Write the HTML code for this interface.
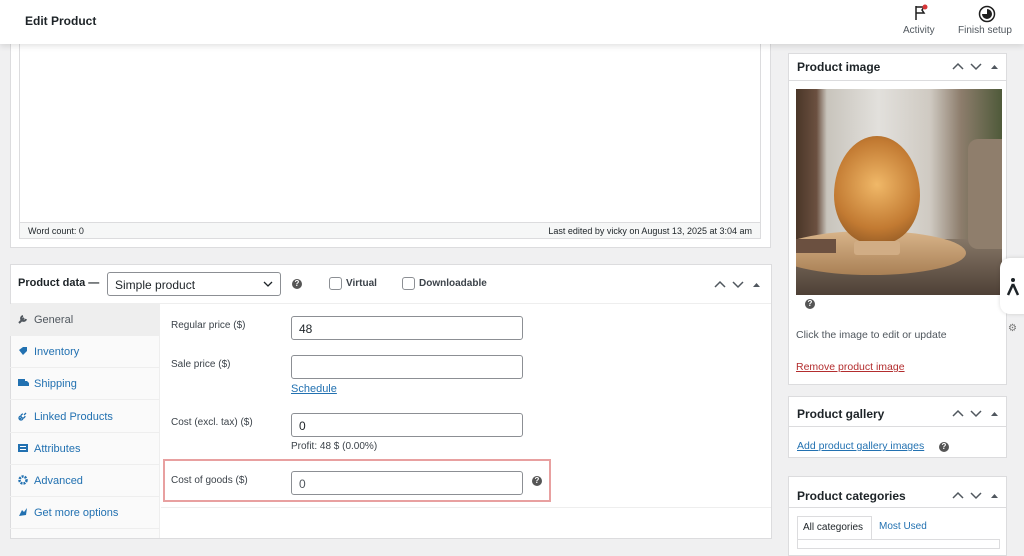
<!DOCTYPE html>
<html><head><style>
*{box-sizing:border-box;margin:0;padding:0}
body{width:1024px;height:547px;overflow:hidden;background:#f0f0f1;font-family:"Liberation Sans",sans-serif;color:#1d2327;position:relative;font-size:11px}
.abs{position:absolute}
.hdr{left:0;top:0;width:1024px;height:44px;background:#fff;box-shadow:0 2px 6px rgba(0,0,0,.12);z-index:5}
.box{background:#fff;border:1px solid #dcdcde}
.inp{position:absolute;border:1px solid #8c8f94;border-radius:3px;background:#fff;height:24px;width:232px;left:291px;font-size:12px;padding:5px 7px}
.lbl{position:absolute;left:171px;font-size:10px;color:#3c434a}
.tab{position:absolute;left:10px;width:150px;height:32px;border-bottom:1px solid #eee;color:#2271b1;font-size:11px;padding:10px 0 0 24px}
.tab svg{position:absolute;left:8px;top:10px}
.q{display:inline-block;width:10px;height:10px;border-radius:50%;background:#555;color:#fff;font-size:8px;text-align:center;line-height:10px;font-weight:bold}
.ttl{position:absolute;font-weight:bold;font-size:12px}
a{color:#2271b1;text-decoration:underline}
</style></head><body>
<div class="abs hdr">
 <div class="abs" style="left:25px;top:14px;font-size:12px;font-weight:bold">Edit Product</div>
 <svg class="abs" style="left:913px;top:4px" width="16" height="18"><path d="M3 2v14M3 3h8l-2 3 2 3H3" fill="none" stroke="#1e1e1e" stroke-width="1.5"/><circle cx="12" cy="3" r="2.5" fill="#d63638"/></svg>
 <div class="abs" style="left:903px;top:25px;font-size:10px;color:#50575e">Activity</div>
 <svg class="abs" style="left:978px;top:5px" width="18" height="18"><circle cx="9" cy="9" r="7.5" fill="none" stroke="#1e1e1e" stroke-width="1.5"/><path d="M9 4a5 5 0 1 1-5 5h5z" fill="#1e1e1e"/></svg>
 <div class="abs" style="left:958px;top:25px;font-size:10px;color:#50575e">Finish setup</div>
</div>
<svg width="0" height="0" style="position:absolute"><defs><g id="ctl"><path d="M1 7l5-5 5 5M19 2l5 5 5-5" fill="none" stroke="#50575e" stroke-width="1.5"/><path d="M39 7l3.5-4 3.5 4z" fill="#50575e"/></g></defs></svg>
<!-- editor -->
<div class="abs box" style="left:10px;top:40px;width:761px;height:208px"></div>
<div class="abs" style="left:19px;top:40px;width:742px;height:183px;border:1px solid #dcdcde;background:#fff"></div>
<div class="abs" style="left:19px;top:223px;width:742px;height:16px;border:1px solid #dcdcde;border-top:none;background:#f6f7f7;font-size:9px;padding:3px 8px;color:#1d2327">Word count: 0<span style="float:right">Last edited by vicky on August 13, 2025 at 3:04 am</span></div>
<!-- product data -->
<div class="abs box" style="left:10px;top:264px;width:762px;height:275px"></div>
<div class="abs" style="left:11px;top:303px;width:760px;border-top:1px solid #eee"></div>
<div class="ttl" style="left:18px;top:277px;font-size:11px">Product data —</div>
<div class="abs" style="left:107px;top:272px;width:174px;height:24px;border:1px solid #8c8f94;border-radius:3px;font-size:12px;padding:5px 7px">Simple product<svg style="position:absolute;right:7px;top:8px" width="10" height="6"><path d="M1 1l4 4 4-4" fill="none" stroke="#1d2327" stroke-width="1.3"/></svg></div>
<span class="q abs" style="left:292px;top:279px">?</span>
<div class="abs" style="left:329px;top:277px;width:13px;height:13px;border:1px solid #8c8f94;border-radius:3px"></div>
<div class="abs" style="left:346px;top:278px;font-size:10px;font-weight:bold;color:#3c434a">Virtual</div>
<div class="abs" style="left:402px;top:277px;width:13px;height:13px;border:1px solid #8c8f94;border-radius:3px"></div>
<div class="abs" style="left:419px;top:278px;font-size:10px;font-weight:bold;color:#3c434a">Downloadable</div>
<svg class="abs" style="left:714px;top:280px" width="48" height="10"><use href="#ctl"/></svg>
<div class="abs" style="left:11px;top:304px;width:149px;height:234px;background:#fafafa;border-right:1px solid #eee"></div>
<div class="tab" style="top:304px;background:#eee;color:#50575e"><svg width="10" height="10"><path d="M1 9l5-5M5 2a2.5 2.5 0 1 0 3 3" stroke="#50575e" stroke-width="2" fill="none"/></svg>General</div>
<div class="tab" style="top:336px"><svg width="10" height="10"><path d="M1 4l4-3h4v4l-4 4z" fill="#2271b1"/></svg>Inventory</div>
<div class="tab" style="top:368px"><svg width="11" height="10"><path d="M0 1h7v7H0zM7 3h2l2 2v3H7z" fill="#2271b1"/></svg>Shipping</div>
<div class="tab" style="top:401px"><svg width="10" height="10"><path d="M2 8l2-2M6 4l2-2M3 5a2 2 0 1 0 2 2M5 3a2 2 0 1 0 2 2" stroke="#2271b1" stroke-width="1.3" fill="none"/></svg>Linked Products</div>
<div class="tab" style="top:433px"><svg width="10" height="10"><rect x="0" y="1" width="10" height="8" fill="#2271b1"/><rect x="2" y="3" width="6" height="1" fill="#fff"/><rect x="2" y="6" width="6" height="1" fill="#fff"/></svg>Attributes</div>
<div class="tab" style="top:465px"><svg width="10" height="10"><circle cx="5" cy="5" r="3.5" fill="none" stroke="#2271b1" stroke-width="2.5" stroke-dasharray="2 1"/></svg>Advanced</div>
<div class="tab" style="top:497px"><svg width="10" height="10"><path d="M1 9l3-6 2 2 3-4-1 7z" fill="#2271b1"/></svg>Get more options</div>
<div class="lbl" style="top:320px">Regular price ($)</div>
<div class="inp" style="top:316px">48</div>
<div class="lbl" style="top:359px">Sale price ($)</div>
<div class="inp" style="top:355px"></div>
<a class="abs" style="left:291px;top:383px;font-size:11px">Schedule</a>
<div class="lbl" style="top:417px">Cost (excl. tax) ($)</div>
<div class="inp" style="top:413px">0</div>
<div class="abs" style="left:291px;top:441px;font-size:10px;color:#3c434a">Profit: 48 $ (0.00%)</div>
<div class="abs" style="left:163px;top:459px;width:388px;height:43px;border:2px solid #e8a0a0"></div>
<div class="lbl" style="top:475px">Cost of goods ($)</div>
<div class="inp" style="top:471px;color:#50575e">0</div>
<span class="q abs" style="left:532px;top:476px">?</span>
<div class="abs" style="left:161px;top:507px;width:610px;border-top:1px solid #eee"></div>
<!-- right -->
<div class="abs box" style="left:788px;top:53px;width:219px;height:332px"></div>
<div class="abs" style="left:789px;top:80px;width:217px;border-top:1px solid #dcdcde"></div>
<div class="ttl" style="left:797px;top:60px">Product image</div>
<svg class="abs" style="left:952px;top:62px" width="48" height="10"><use href="#ctl"/></svg>
<div class="abs" style="left:796px;top:89px;width:206px;height:206px;overflow:hidden;background:linear-gradient(90deg,#4a3628 0,#6b5040 10%,#c8c4bc 15%,#e2e0dc 40%,#cfcac2 65%,#8d7d6c 80%,#4f5a3a 100%)">
 <div class="abs" style="left:0;top:150px;width:206px;height:56px;background:linear-gradient(#857666,#4e4036)"></div>
 <div class="abs" style="left:-20px;top:142px;width:190px;height:44px;border-radius:50%;background:linear-gradient(#d8b48a,#a98055)"></div>
 <div class="abs" style="left:172px;top:50px;width:34px;height:110px;background:#8f7e6c;border-radius:10px 0 0 10px"></div>
 <div class="abs" style="left:0;top:150px;width:40px;height:14px;background:#6b5040"></div>
 <div class="abs" style="left:38px;top:47px;width:86px;height:108px;border-radius:50% 50% 45% 45%/55% 55% 45% 45%;background:radial-gradient(circle at 50% 45%,#f0b868,#c27a32 60%,#7a4a1e)"></div>
 <div class="abs" style="left:58px;top:152px;width:46px;height:14px;background:#d1ad85;border-radius:3px"></div>
</div>
<span class="q abs" style="left:805px;top:299px">?</span>
<div class="abs" style="left:796px;top:329px;font-size:10.5px;color:#50575e">Click the image to edit or update</div>
<a class="abs" style="left:796px;top:361px;font-size:10.5px;color:#b32d2e">Remove product image</a>
<div class="abs" style="left:1000px;top:258px;width:26px;height:56px;background:#fff;border-radius:10px 0 0 10px;box-shadow:0 0 4px rgba(0,0,0,.15)"></div>
<svg class="abs" style="left:1006px;top:277px" width="14" height="20"><circle cx="7" cy="3" r="2" fill="#1d2327"/><path d="M7 7L2 18M7 7l5 11" stroke="#1d2327" stroke-width="2.5" fill="none"/></svg>
<div class="abs" style="left:1008px;top:323px;font-size:10px;color:#777">⚙</div>
<div class="abs box" style="left:788px;top:396px;width:219px;height:62px"></div>
<div class="abs" style="left:789px;top:426px;width:217px;border-top:1px solid #dcdcde"></div>
<div class="ttl" style="left:797px;top:407px">Product gallery</div>
<svg class="abs" style="left:952px;top:409px" width="48" height="10"><use href="#ctl"/></svg>
<a class="abs" style="left:797px;top:440px;font-size:10.5px">Add product gallery images</a>
<span class="q abs" style="left:939px;top:442px">?</span>
<div class="abs box" style="left:788px;top:476px;width:219px;height:80px"></div>
<div class="abs" style="left:789px;top:507px;width:217px;border-top:1px solid #dcdcde"></div>
<div class="ttl" style="left:797px;top:489px">Product categories</div>
<svg class="abs" style="left:952px;top:491px" width="48" height="10"><use href="#ctl"/></svg>
<div class="abs" style="left:797px;top:516px;width:75px;height:24px;border:1px solid #dcdcde;border-bottom:none;font-size:10px;padding:5px 5px">All categories</div>
<div class="abs" style="left:879px;top:521px;font-size:10px;color:#2271b1">Most Used</div>
<div class="abs" style="left:797px;top:539px;width:203px;height:10px;border:1px solid #dcdcde"></div>
</body></html>
